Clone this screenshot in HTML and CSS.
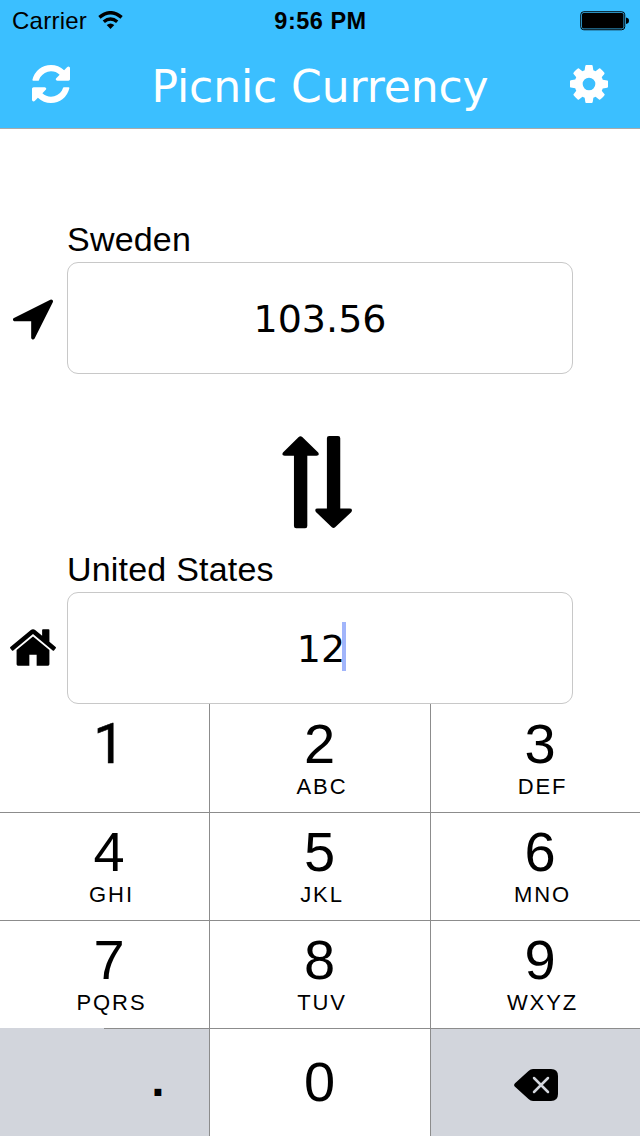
FILE: index.html
```
<!DOCTYPE html>
<html lang="en">
<head>
<meta charset="utf-8">
<title>Picnic Currency</title>
<link rel="stylesheet" href="styles.css">
</head>
<body>
<div class="app">
  <header class="header">
    <div class="status">
      <div class="network"><span class="carrier">Carrier</span>
        <svg class="wifi" viewBox="0 0 25 18"><path d="M12.5 18L8.700 14.100Q12.500 10.900 16.300 14.100Z"/><path class="wave" d="M5.800 10.800Q12.500 5 19.200 10.800M1.400 6.400Q12.500-3 23.600 6.400"/></svg>
      </div>
      <span class="time">9:56 PM</span>
      <svg class="battery" viewBox="0 0 50 20"><rect class="shell" x=".75" y=".75" width="44" height="18" rx="3"/><rect x="2" y="2" width="41.5" height="15.5" rx="1.5"/><path d="M46 6.500Q49 7 49 9.700T46 13Z"/></svg>
    </div>
    <div class="nav">
      <svg class="nav-icon" viewBox="128 128 1536 1536"><path d="M1639 1056q0 5-1 7-64 268-268 434.500t-478 166.500q-146 0-282.500-55t-243.500-157l-129 129q-19 19-45 19t-45-19-19-45v-448q0-26 19-45t45-19h448q26 0 45 19t19 45-19 45l-137 137q71 66 161 102t187 36q134 0 250-65t186-179q11-17 53-117 8-23 30-23h192q13 0 22.500 9.500t9.500 22.500zm25-800v448q0 26-19 45t-45 19h-448q-26 0-45-19t-19-45 19-45l138-138q-148-137-349-137-134 0-250 65t-186 179q-11 17-53 117-8 23-30 23h-199q-13 0-22.500-9.500t-9.500-22.500v-7q65-268 270-434.500t480-166.500q146 0 284 55.500t245 156.500l130-129q19-19 45-19t45 19 19 45z"/></svg>
      <h1 class="title">Picnic Currency</h1>
      <svg class="nav-icon" viewBox="128 128 1536 1536"><path d="M1152 896q0-106-75-181t-181-75-181 75-75 181 75 181 181 75 181-75 75-181zm512-109v222q0 12-8 23t-20 13l-185 28q-19 54-39 91 35 50 107 138 10 12 10 25t-9 23q-27 37-99 108t-94 71q-12 0-26-9l-138-108q-44 23-91 38-16 136-29 186-7 28-36 28h-222q-14 0-24.500-8.500t-11.500-21.500l-28-184q-49-16-90-37l-141 107q-10 9-25 9-14 0-25-11-126-114-165-168-7-10-7-23 0-12 8-23 15-21 51-66.500t54-70.500q-27-50-41-99l-183-27q-13-2-21-12.500t-8-23.500v-222q0-12 8-23t19-13l186-28q14-46 39-92-40-57-107-138-10-12-10-24 0-10 9-23 26-36 98.500-107.500t94.500-71.500q13 0 26 10l138 107q44-23 91-38 16-136 29-186 7-28 36-28h222q14 0 24.500 8.500t11.500 21.500l28 184q49 16 90 37l142-107q9-9 24-9 13 0 25 10 129 119 165 170 7 8 7 22 0 12-8 23-15 21-51 66.500t-54 70.500q26 50 41 98l183 28q13 2 21 12.500t8 23.500z"/></svg>
    </div>
  </header>
  <main class="converter">
    <section class="currency">
      <span class="label">Sweden</span>
      <div class="marker"><svg class="arrow" viewBox="192 256 1408 1408"><path d="M1593 349l-640 1280q-17 35-57 35-5 0-15-2-22-5-35.500-22.500t-13.500-39.500v-576h-576q-22 0-39.500-13.500t-22.500-35.500 4-42 29-30l1280-640q13-7 29-7 27 0 45 19 15 14 18.500 34.500t-6.500 39.500z"/></svg></div>
      <div class="field"><span>103.56</span></div>
    </section>
    <svg class="swap" viewBox="0 0 71 94"><path d="M16.500.9Q18.300-.6 20.100.9L36.200 16.600Q38 20 34.500 20H25.200V91Q25.200 93.200 23 93.200H14Q11.700 93.200 11.700 91V20H2.300Q-1.200 20 .600 16.600ZM47.200 0H56.300Q58.500 0 58.500 2.200V73.300H67.800Q71.600 73.300 69.800 76.800L53.300 92.300Q51.700 93.800 50 92.300L33.900 76.800Q32 73.300 35.600 73.300H45V2.200Q45 0 47.200 0Z"/></svg>
    <section class="currency">
      <span class="label">United States</span>
      <div class="marker"><svg class="home" viewBox="89 253 1614 1283"><path d="M1472 992v480q0 26-19 45t-45 19h-384v-384h-256v384h-384q-26 0-45-19t-19-45v-480q0-1 .5-3t.5-3l575-474 575 474q1 2 1 6zm223-69l-62 74q-8 9-21 11h-3q-13 0-21-7l-692-577-692 577q-12 8-24 7-13-2-21-11l-62-74q-8-10-7-23.500t11-21.500l719-599q32-26 76-26t76 26l244 204v-195q0-14 9-23t23-9h192q14 0 23 9t9 23v408l219 182q10 8 11 21.500t-7 23.500z"/></svg></div>
      <div class="field"><span>12</span><i class="caret"></i></div>
    </section>
  </main>
  <div class="keypad">
    <div class="key"><b class="digit one">1</b></div>
    <div class="key"><b class="digit">2</b><span class="letters">ABC</span></div>
    <div class="key"><b class="digit">3</b><span class="letters">DEF</span></div>
    <div class="key"><b class="digit">4</b><span class="letters">GHI</span></div>
    <div class="key"><b class="digit">5</b><span class="letters">JKL</span></div>
    <div class="key"><b class="digit">6</b><span class="letters">MNO</span></div>
    <div class="key split"><b class="digit">7</b><span class="letters">PQRS</span></div>
    <div class="key"><b class="digit">8</b><span class="letters">TUV</span></div>
    <div class="key"><b class="digit">9</b><span class="letters">WXYZ</span></div>
    <div class="key util point">.</div>
    <div class="key zero"><b class="digit">0</b></div>
    <div class="key util erase"><svg class="backspace" viewBox="0 0 44 32"><path d="M19 0H37Q44 0 44 7V25Q44 32 37 32H19Q16.500 32 14.500 30L1 17.800Q-.8 16 1 14.200L14.500 2Q16.500 0 19 0Z"/><path class="cross" d="M20 9L34 23M34 9L20 23"/></svg></div>
  </div>
</div>
</body>
</html>
```

FILE: styles.css
```
* { box-sizing: border-box; }
body { margin: 0; background: #fff; color: #000; font-family: "Liberation Sans", Arial, sans-serif; }
svg { display: block; }
.app { width: 640px; height: 1136px; overflow: hidden; display: flex; flex-direction: column; }

.header { height: 129px; background: #3bbfff; border-bottom: 1px solid #aaa; }
.status { height: 40px; display: grid; grid-template-columns: 1fr auto 1fr; align-items: center; padding: 2px 11px 0 12px; font-size: 24px; line-height: 38px; }
.network { display: flex; align-items: center; gap: 11px; }
.carrier { letter-spacing: .25px; }
.wifi { width: 25px; height: 18px; margin-top: -2px; }
.wave { fill: none; stroke: #000; stroke-width: 3.4; }
.time { font-weight: bold; font-size: 23.500px; letter-spacing: .5px; }
.battery { width: 50px; height: 20px; justify-self: end; margin-right: -1px; }
.shell { fill: none; stroke: #000; stroke-width: 1; }
.nav { height: 88px; display: flex; align-items: center; justify-content: space-between; padding: 0 32px; }
.nav-icon { width: 38px; height: 38px; fill: #fff; }
.title { margin: 6px 0 0; color: #fff; font: 400 44px/50px Verdana, "DejaVu Sans", sans-serif; letter-spacing: -.1px; }

.converter { height: 575px; display: flex; flex-direction: column; padding-top: 90px; }
.currency { display: grid; grid-template: 43px 112px / 67px 506px; }
.label { grid-column: 2; font-size: 34px; line-height: 40px; letter-spacing: .2px; }
.marker { display: flex; align-items: center; justify-content: center; }
.arrow { width: 40px; height: 41px; margin: 3px 0 0 -1px; }
.home { width: 46px; height: 37px; margin: -1px 0 0 -1px; }
.field { display: flex; align-items: center; justify-content: center; padding-top: 2px; border: 1px solid #c8c8c8; border-radius: 11px; font: 38px/48px Verdana, "DejaVu Sans", sans-serif; }
.caret { width: 4px; height: 49px; margin: -5px -3px 0 -3px; background: #a1b5fb; }
.swap { width: 71px; height: 94px; margin: 62px 0 20px 281.500px; }

.keypad { height: 432px; display: grid; grid-template: 109px 108px 108px 107px / 210px 221px 209px; }
.key { display: flex; flex-direction: column; align-items: center; padding-top: 11px; border-bottom: 1px solid #8c8c8c; border-right: 1px solid #8c8c8c; }
.key:nth-child(-n+3) { padding-top: 12px; }
.key:nth-child(3n) { border-right: 0; padding-left: 9px; }
.key:nth-child(3n+1) { padding-left: 9px; }
.key:nth-child(3n+2) { padding-right: 1px; }
.key:nth-child(n+10) { border-bottom: 0; }
.digit { font-size: 56px; line-height: 56px; font-weight: 400; }
.one { font-family: Roboto, sans-serif; -webkit-text-stroke: .5px #000; }
.letters { margin-top: 4px; padding-left: 5px; font-size: 22px; line-height: 22px; letter-spacing: 1.900px; }
.split { border-bottom: 0; background: linear-gradient(to right, #d2d5dc 104px, #8c8c8c 104px) left bottom / 100% 1px no-repeat; }
.util { background: #d2d5dc; }
.key.point { padding: 18px 0 0 107px; font: bold 48px/66px "Liberation Sans", Arial, sans-serif; }
.key.zero { padding-top: 25px; }
.key.erase { padding: 1px 0 0 1px; justify-content: center; }
.backspace { width: 44px; height: 32px; margin-top: 4px; }
.cross { fill: none; stroke: #d2d5dc; stroke-width: 2.5; stroke-linecap: round; }
```
